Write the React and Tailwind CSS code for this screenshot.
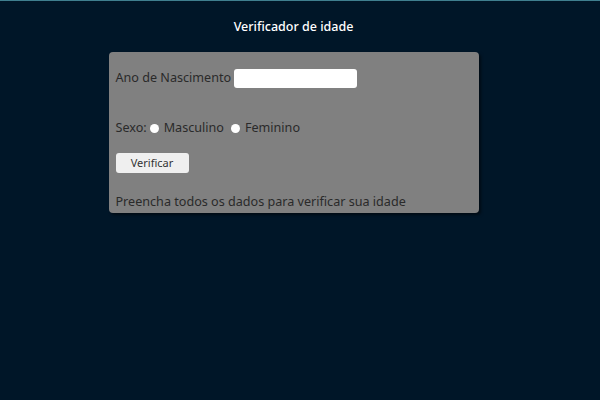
import React from "react";

export default function App() {
  return (
    <div className="w-[600px] h-[400px] bg-[#001628] border-t border-[#3f7f8f] text-[#2a2a2a]" style={{ fontFamily: '"Noto Sans", sans-serif' }}>
      <div className="w-[587px] flex flex-col items-center">
        <h1 className="mt-[15px] h-[22px] leading-[22px] text-[12.5px] font-medium text-white">Verificador de idade</h1>
        <div className="mt-[14px] w-[370px] h-[161px] bg-[#808080] rounded-[4px] shadow-[2px_2px_3px_rgba(0,0,0,0.5)] pl-[7px] flex flex-col">
          <div className="mt-[16px] h-[20px] flex items-center text-[12.6px]">
            <span>Ano de Nascimento</span>
            <div className="ml-[3px] w-[123px] h-[19px] bg-white rounded-[3px]" />
          </div>
          <div className="mt-[30px] h-[20px] flex items-center text-[12.6px]">
            <span>Sexo:</span>
            <span className="ml-[3px] w-[9px] h-[9px] rounded-full bg-white" />
            <span className="ml-[5px]">Masculino</span>
            <span className="ml-[7px] w-[9px] h-[9px] rounded-full bg-white" />
            <span className="ml-[5px]">Feminino</span>
          </div>
          <div className="mt-[15px] w-[73px] h-[20px] bg-[#efefef] rounded-[3px] flex items-center justify-center text-[11px] text-[#333]">Verificar</div>
          <div className="mt-[19px] h-[20px] flex items-center text-[12.6px]">Preencha todos os dados para verificar sua idade</div>
        </div>
      </div>
    </div>
  );
}
